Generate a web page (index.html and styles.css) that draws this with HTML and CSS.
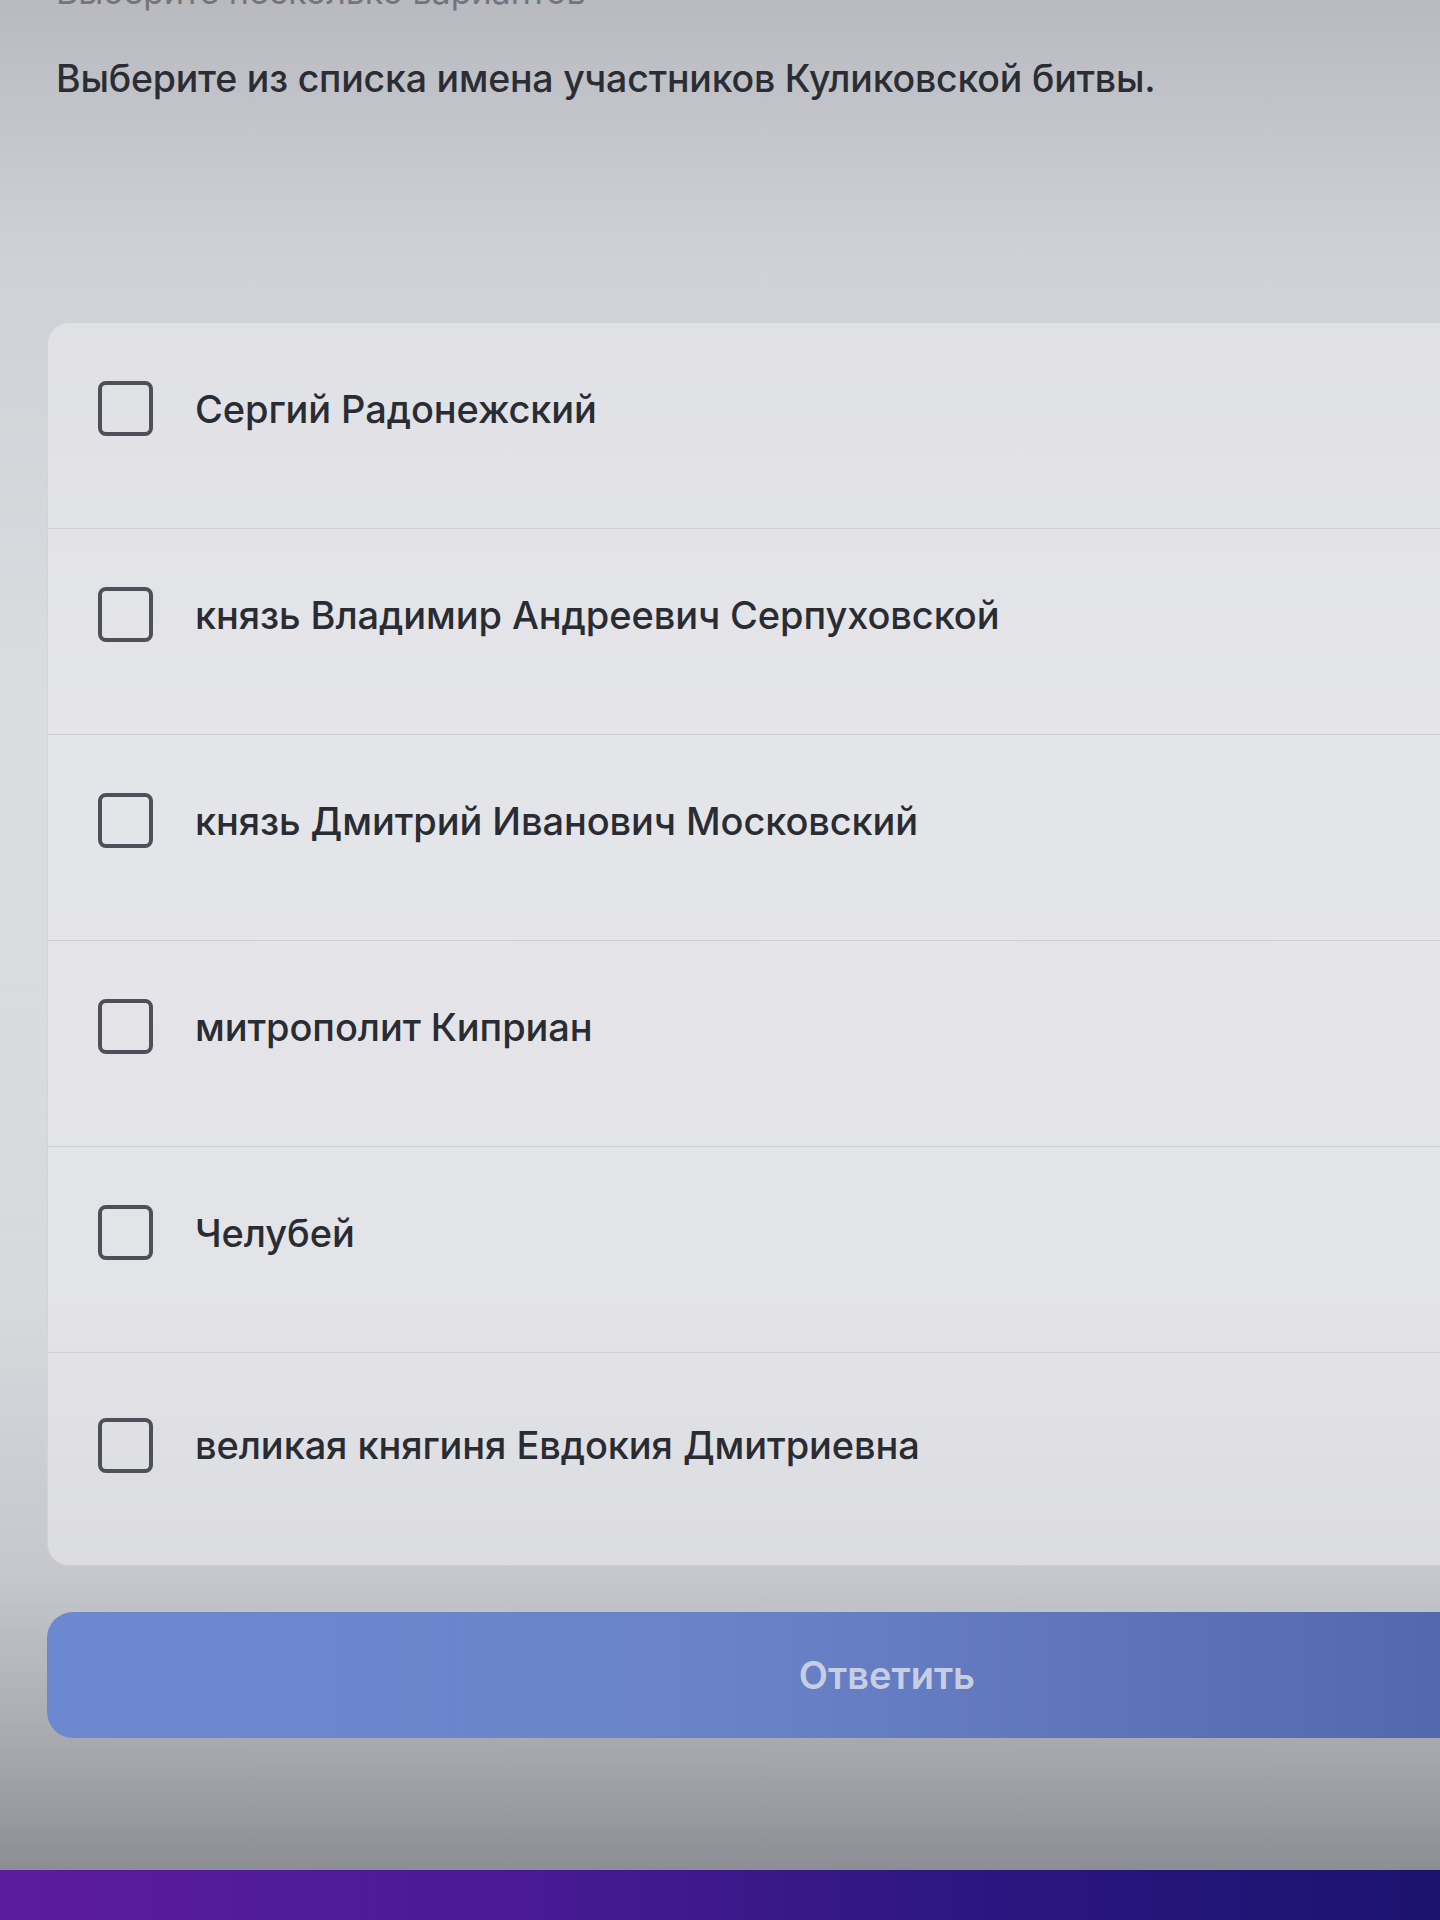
FILE: index.html
```html
<!DOCTYPE html>
<html lang="ru">
<head>
<meta charset="utf-8">
<title>Тест</title>
<link rel="stylesheet" href="styles.css">
</head>
<body>
<div class="screen">
  <div class="page">
    <p class="hint">Выберите несколько вариантов</p>
    <h1 class="question">Выберите из списка имена участников Куликовской битвы.</h1>
    <div class="options">
      <label class="option"><span class="box"></span><span class="label">Сергий Радонежский</span></label>
      <label class="option"><span class="box"></span><span class="label">князь Владимир Андреевич Серпуховской</span></label>
      <label class="option"><span class="box"></span><span class="label">князь Дмитрий Иванович Московский</span></label>
      <label class="option"><span class="box"></span><span class="label">митрополит Киприан</span></label>
      <label class="option"><span class="box"></span><span class="label">Челубей</span></label>
      <label class="option"><span class="box"></span><span class="label">великая княгиня Евдокия Дмитриевна</span></label>
    </div>
    <button class="submit" type="button">Ответить</button>
  </div>
  <div class="bottombar"></div>
</div>
</body>
</html>
```
FILE: styles.css
```css
html, body {
  margin: 0;
  padding: 0;
}
body {
  width: 1440px;
  height: 1920px;
  overflow: hidden;
  font-family: Inter, "Liberation Sans", Arial, sans-serif;
  background: linear-gradient(to bottom, #b9babf 0px, #d0d1d6 260px, #dbdce0 700px, #d8d9dd 1300px, #c6c7cc 1580px, #a5a6ac 1760px, #8d8e94 1870px);
}
.screen {
  position: relative;
  width: 1440px;
  height: 1920px;
  display: flex;
  flex-direction: column;
}
.page {
  flex: 1;
  width: 1700px;
  padding-left: 47px;
  box-sizing: border-box;
}
.hint {
  margin: -28px 0 0 9px;
  font-size: 34px;
  line-height: 40px;
  color: #74757c;
}
.question {
  margin: 45px 0 0 9px;
  font-size: 37.5px;
  line-height: 44px;
  font-weight: 500;
  color: #2b2d34;
  letter-spacing: -0.2px;
}
.options {
  margin-top: 221px;
  background: rgba(236, 237, 241, 0.55);
  border: 1px solid rgba(200, 201, 206, 0.6);
  border-radius: 22px;
  display: flex;
  flex-direction: column;
}
.option {
  height: 206px;
  box-sizing: border-box;
  padding: 0 0 34px 50px;
  display: flex;
  align-items: center;
  gap: 42px;
  border-bottom: 1px solid rgba(190, 191, 197, 0.55);
}
.option:last-child {
  border-bottom: none;
  height: 212px;
  padding-bottom: 28px;
}
.box {
  width: 47px;
  height: 47px;
  flex: 0 0 auto;
  border: 4px solid #4e5059;
  border-radius: 8px;
}
.label {
  font-size: 38px;
  line-height: 44px;
  font-weight: 500;
  color: #2a2c33;
  letter-spacing: -0.1px;
}
.submit {
  display: block;
  margin-top: 46px;
  width: 1680px;
  height: 126px;
  border: none;
  border-radius: 26px;
  background: linear-gradient(to right, #6c89d0 0%, #6a83c8 40%, #5a70b6 70%, #4a5ca2 100%);
  color: #c8cee2;
  font-family: Inter, "Liberation Sans", Arial, sans-serif;
  font-size: 38px;
  font-weight: 600;
  padding: 0;
}
.bottombar {
  height: 50px;
  flex: 0 0 auto;
  background: linear-gradient(to right, #5c1c9e 0%, #4a1a94 35%, #2a1680 70%, #1c136e 100%);
}
```
